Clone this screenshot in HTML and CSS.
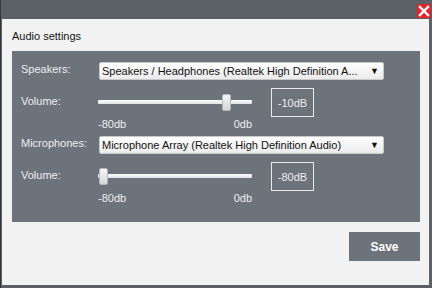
FILE: index.html
```html
<!DOCTYPE html>
<html lang="en">
<head>
    <meta charset="UTF-8">
    <title>Audio settings</title>
    <link rel="stylesheet" href="styles.css">
</head>
<body>
    <div class="window">
        <div class="titlebar">
            <span class="close">
                <svg width="14" height="14" viewBox="0 0 14 14">
                    <path d="M3 3 L11 11 M11 3 L3 11" stroke="#fff" stroke-width="2.4" stroke-linecap="square"/>
                </svg>
            </span>
        </div>

        <div class="content">
            <h2>Audio settings</h2>

            <div class="panel">
                <div class="row select-row">
                    <label>Speakers:</label>
                    <div class="select">
                        <span>Speakers / Headphones (Realtek High Definition A...</span>
                        <span class="arrow">&#9660;</span>
                    </div>
                </div>

                <div class="row volume-row">
                    <label>Volume:</label>
                    <div class="slider">
                        <div class="track"></div>
                        <div class="thumb" style="left: 124px"></div>
                    </div>
                    <div class="db">-10dB</div>
                </div>
                <div class="scale">
                    <span>-80db</span>
                    <span>0db</span>
                </div>

                <div class="row select-row">
                    <label>Microphones:</label>
                    <div class="select">
                        <span>Microphone Array (Realtek High Definition Audio)</span>
                        <span class="arrow">&#9660;</span>
                    </div>
                </div>

                <div class="row volume-row">
                    <label>Volume:</label>
                    <div class="slider">
                        <div class="track"></div>
                        <div class="thumb" style="left: 1px"></div>
                    </div>
                    <div class="db">-80dB</div>
                </div>
                <div class="scale">
                    <span>-80db</span>
                    <span>0db</span>
                </div>
            </div>

            <div class="footer">
                <button class="save">Save</button>
            </div>
        </div>
    </div>
</body>
</html>
```

FILE: styles.css
```css
* {
    margin: 0;
    padding: 0;
    box-sizing: border-box;
}

body {
    font-family: "Liberation Sans", Arial, sans-serif;
    font-size: 11px;
    background: #2f3236;
    width: 432px;
    height: 288px;
    overflow: hidden;
}

.window {
    width: 432px;
    height: 288px;
    background: #5b6167;
    border-left: 1px solid #34373b;
    display: flex;
    flex-direction: column;
}

.titlebar {
    height: 19px;
    display: flex;
    justify-content: flex-end;
    align-items: flex-start;
    padding: 4px 1px 0 0;
}

.close {
    width: 14px;
    height: 14px;
    background: #e3222c;
    display: flex;
}

.content {
    flex: 1;
    background: #f2f2f2;
    margin: 0 3px 3px 1px;
    padding: 10px 9px 0 10px;
    display: flex;
    flex-direction: column;
}

h2 {
    font-size: 11px;
    font-weight: normal;
    color: #141414;
    height: 22px;
    line-height: 15px;
}

.panel {
    background: #6d737a;
    height: 171px;
    padding: 11px 0 0 9px;
    color: #eceef0;
}

.row {
    display: flex;
    align-items: center;
}

.row label {
    width: 78px;
    flex-shrink: 0;
}

.select-row {
    height: 18px;
}

.select-row label {
    margin-top: -4px;
}

.select {
    width: 285px;
    height: 18px;
    background: linear-gradient(#ffffff, #ebebeb);
    border: 1px solid #c9c9c9;
    border-radius: 2px;
    color: #111;
    padding: 0 4px 0 2px;
    display: flex;
    align-items: center;
    justify-content: space-between;
    white-space: nowrap;
    overflow: hidden;
}

.arrow {
    font-size: 9px;
    color: #111;
}

.volume-row {
    height: 29px;
    margin-top: 8px;
}

.volume-row label {
    margin-top: -3px;
}

.slider {
    position: relative;
    width: 154px;
    height: 18px;
    margin-left: -1px;
}

.track {
    position: absolute;
    left: 0;
    right: 0;
    top: 6px;
    height: 4px;
    background: linear-gradient(#ffffff, #dfe2e5);
    border-radius: 1px;
}

.thumb {
    position: absolute;
    top: 0;
    width: 9px;
    height: 17px;
    background: linear-gradient(#f4f4f4, #d8d8d8);
    border: 1px solid #b5b8bb;
    border-radius: 2px;
}

.db {
    width: 43px;
    height: 29px;
    margin-left: 19px;
    border: 1px solid #e8eaec;
    display: flex;
    align-items: center;
    justify-content: center;
    color: #eceef0;
}

.scale {
    display: flex;
    justify-content: space-between;
    width: 154px;
    margin-left: 77px;
    height: 19px;
    padding-top: 1px;
}

.footer {
    display: flex;
    justify-content: flex-end;
    padding-top: 10px;
}

.save {
    width: 71px;
    height: 29px;
    border: none;
    background: #6d737a;
    color: #fff;
    font-family: "Liberation Sans", Arial, sans-serif;
    font-size: 12px;
    font-weight: bold;
}
```
